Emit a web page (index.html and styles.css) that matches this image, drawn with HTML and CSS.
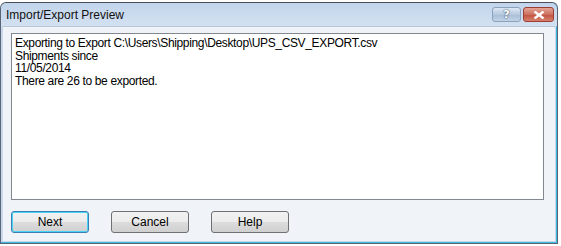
FILE: index.html
```html
<!DOCTYPE html>
<html lang="en">
<head>
  <meta charset="UTF-8">
  <title>Import/Export Preview</title>
  <link rel="stylesheet" href="styles.css">
</head>
<body>
  <div class="window">
    <div class="titlebar">
      <span class="title">Import/Export Preview</span>
      <div class="caption-btns">
        <button class="cap-btn help-cap">?</button>
        <button class="cap-btn close-cap">
          <svg width="12" height="8" viewBox="0 0 12 8">
            <path d="M1.5 0.5 L10.5 7.5 M10.5 0.5 L1.5 7.5" stroke="#fff" stroke-width="2.4"/>
          </svg>
        </button>
      </div>
    </div>

    <div class="client">
      <!-- log box -->
      <div class="log">
        <div>Exporting to Export C:\Users\Shipping\Desktop\UPS_CSV_EXPORT.csv</div>
        <div>Shipments since</div>
        <div>11/05/2014</div>
        <div>There are 26 to be exported.</div>
      </div>

      <div class="actions">
        <button class="btn default">Next</button>
        <button class="btn">Cancel</button>
        <button class="btn">Help</button>
      </div>
    </div>
  </div>
</body>
</html>
```

FILE: styles.css
```css
body {
  margin: 0;
  background-color: #fff;
  font-family: 'Liberation Sans', Arial, sans-serif;
}
.window {
  width: 556px;
  height: 240px;
  margin-top: 2px;
  border: 1px solid #5a6675;
  border-top-color: #4a4f57;
  border-radius: 6px 6px 0 0;
  background-color: #c7d8ed;
  box-shadow: inset 0 -1px 0 #3fb6dc, inset -1px 0 0 #3fb6dc;
  display: flex;
  flex-direction: column;
}
.titlebar {
  height: 23px;
  display: flex;
  align-items: center;
  justify-content: space-between;
  background: linear-gradient(#c2d5ec, #d3e1f1);
  border-radius: 6px 6px 0 0;
  padding: 0 3px 0 5px;
}
.title {
  font-size: 12px;
  color: #111;
  margin-top: 1px;
}
.caption-btns {
  display: flex;
  gap: 2px;
  margin-top: 0;
}
.cap-btn {
  height: 15px;
  border-radius: 3px;
  padding: 0;
  display: flex;
  align-items: center;
  justify-content: center;
}
.help-cap {
  width: 29px;
  border: 1px solid #8ba2bd;
  background: linear-gradient(#dde8f5, #b7c9de 50%, #a8bdd6 51%, #c2d3e6);
  color: #fff;
  font-family: 'DejaVu Sans', sans-serif;
  font-weight: bold;
  font-size: 11px;
  text-shadow: 0 0 2px #44566e, 0 0 1px #44566e;
}
.close-cap {
  width: 31px;
  border: 1px solid #9c3c32;
  background: linear-gradient(#e5a597, #cc6f5f 50%, #c2503e 51%, #d7826f);
}
.client {
  flex: 1;
  margin: 0 2px 2px 2px;
  background-color: #f0f4f9;
  border-top: 1px solid #b6c6d9;
  padding: 6px 11px 0 8px;
  display: flex;
  flex-direction: column;
}
.log {
  height: 159px;
  background-color: #fff;
  border: 1px solid #828790;
  padding: 3px 3px;
  font-size: 12px;
  letter-spacing: -0.35px;
  line-height: 12.5px;
  color: #000;
}
.actions {
  display: flex;
  gap: 22px;
  margin-top: 11px;
}
.btn {
  width: 78px;
  height: 22px;
  border: 1px solid #707070;
  border-radius: 3px;
  background: linear-gradient(#f2f2f2, #ebebeb 50%, #dddddd 51%, #cfcfcf);
  font-family: 'Liberation Sans', Arial, sans-serif;
  font-size: 12px;
  color: #000;
  padding: 0;
}
.btn.default {
  border-color: #3c7fb1;
  box-shadow: inset 0 0 0 1px #48d3f6;
}
```
